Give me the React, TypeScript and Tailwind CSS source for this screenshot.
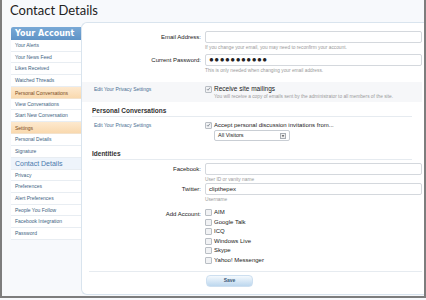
import React from 'react'

const sidebar: { label: string; kind?: 'head' | 'group' | 'active' }[] = [
  { label: 'Your Account', kind: 'head' },
  { label: 'Your Alerts' },
  { label: 'Your News Feed' },
  { label: 'Likes Received' },
  { label: 'Watched Threads' },
  { label: 'Personal Conversations', kind: 'group' },
  { label: 'View Conversations' },
  { label: 'Start New Conversation' },
  { label: 'Settings', kind: 'group' },
  { label: 'Personal Details' },
  { label: 'Signature' },
  { label: 'Contact Details', kind: 'active' },
  { label: 'Privacy' },
  { label: 'Preferences' },
  { label: 'Alert Preferences' },
  { label: 'People You Follow' },
  { label: 'Facebook Integration' },
  { label: 'Password' },
]

const accounts = ['AIM', 'Google Talk', 'ICQ', 'Windows Live', 'Skype', 'Yahoo! Messenger']

function Check({ on }: { on?: boolean }) {
  return (
    <span className="w-[7px] h-[7px] border border-[#b9bec4] bg-[#f1f2f4] rounded-[1px] flex items-center justify-center shrink-0">
      {on && (
        <svg viewBox="0 0 8 8" className="w-[6px] h-[6px]">
          <path d="M1.5 4.2 L3.2 6 L6.6 1.6" stroke="#6b7580" strokeWidth="1.2" fill="none" />
        </svg>
      )}
    </span>
  )
}

function Row({ label, children, className = '' }: { label?: string; children: React.ReactNode; className?: string }) {
  return (
    <div className={`flex ${className}`}>
      <div className="w-[123px] shrink-0 text-right pr-[4px] text-[6px] text-[#222] leading-[12px]">{label}</div>
      <div className="flex-1 min-w-0">{children}</div>
    </div>
  )
}

function Input({ value, dots }: { value?: string; dots?: boolean }) {
  return (
    <div className="h-[12px] border border-[#d4d8dd] rounded-[2px] bg-white flex items-center px-[3px] text-[6px] text-[#222]">
      {dots ? <span className="text-[8px] tracking-[0.5px] font-bold leading-none">●●●●●●●●●●●</span> : value}
    </div>
  )
}

function Hint({ children }: { children: React.ReactNode }) {
  return <div className="text-[4.8px] text-[#9a9a9a] leading-[7px] mt-[1px]">{children}</div>
}

export default function App() {
  return (
    <div className="w-[426px] h-[300px] bg-[#f7f9fc] overflow-hidden" style={{ fontFamily: '"Liberation Sans", Arial, sans-serif' }}>
      <div className="h-[298px] border-x-2 border-b-2 border-[#7d7d7d] flex flex-col">
        {/* Title */}
        <div className="h-[22px] pl-[8px] pt-[2px] text-[13px] leading-[16px] text-[#222]" style={{ fontFamily: 'Lato, "Liberation Sans", sans-serif' }}>
          Contact Details
        </div>

        <div className="flex flex-1 min-h-0">
          {/* Sidebar */}
          <div className="w-[70px] ml-[9px] mt-[5px] shrink-0 self-start bg-white">
            {sidebar.map((s, i) => {
              if (s.kind === 'head')
                return (
                  <div key={i} className="h-[13px] bg-gradient-to-b from-[#79a9d6] to-[#5f93c6] text-white text-[8px] font-bold leading-[13px] pl-[4px] rounded-tl-[2px]" style={{ fontFamily: '"Trebuchet MS", "DejaVu Sans", sans-serif' }}>
                    {s.label}
                  </div>
                )
              if (s.kind === 'group')
                return (
                  <div key={i} className="h-[12px] bg-gradient-to-b from-[#fde9cf] to-[#f9d9ae] text-[#7a4b1c] text-[5px] leading-[12px] pl-[4px] border-b border-[#f3e2cc]">
                    {s.label}
                  </div>
                )
              if (s.kind === 'active')
                return (
                  <div key={i} className="h-[12px] bg-[#eef4fb] text-[#4a79ad] text-[7px] leading-[12px] pl-[4px] border-b border-[#e8edf2]">
                    {s.label}
                  </div>
                )
              return (
                <div key={i} className="h-[11.7px] text-[#3e5f7f] text-[5px] leading-[11px] pl-[4px] border-b border-[#e8edf2]">
                  {s.label}
                </div>
              )
            })}
          </div>

          {/* Main panel */}
          <div className="flex-1 bg-white border-l border-t border-[#d9e4ee] rounded-tl-[6px] rounded-bl-[6px] border-b mb-[1px] pt-[8px] pr-[2px]">
            <Row label="Email Address:">
              <Input />
              <Hint>If you change your email, you may need to reconfirm your account.</Hint>
            </Row>
            <Row label="Current Password:" className="mt-[3px]">
              <Input dots />
              <Hint>This is only needed when changing your email address.</Hint>
            </Row>

            <div className="mt-[8px] bg-[#f6f7f9] h-[20px] flex items-start pt-[3px]">
              <div className="w-[123px] pl-[12px] text-[5px] text-[#4a6f92] leading-[8px]">Edit Your Privacy Settings</div>
              <div>
                <div className="flex items-center gap-[2px] text-[6.5px] text-[#222] leading-[8px]">
                  <Check on /> Receive site mailings
                </div>
                <div className="pl-[9px] text-[4.8px] text-[#9a9a9a] leading-[7px]">
                  You will receive a copy of emails sent by the administrator to all members of the site.
                </div>
              </div>
            </div>

            <div className="mx-[10px] mt-[3px] border-b border-[#e6ebf0] text-[6.5px] font-bold text-[#333] leading-[11px]">
              Personal Conversations
            </div>
            <div className="flex mt-[4px]">
              <div className="w-[123px] pl-[12px] text-[5px] text-[#4a6f92] leading-[8px]">Edit Your Privacy Settings</div>
              <div>
                <div className="flex items-center gap-[2px] text-[6px] text-[#222] leading-[8px]">
                  <Check on /> Accept personal discussion invitations from...
                </div>
                <div className="ml-[9px] mt-[1px] w-[76px] h-[11px] border border-[#c9ced4] rounded-[2px] flex items-center justify-between px-[3px] text-[5.5px] text-[#222]">
                  All Visitors
                  <span className="w-[6px] h-[6px] border border-[#a8adb3] bg-[#eee] flex items-center justify-center">
                    <svg viewBox="0 0 6 6" className="w-[4px] h-[4px]"><path d="M1 2 L5 2 L3 4.5 Z" fill="#444" /></svg>
                  </span>
                </div>
              </div>
            </div>

            <div className="mx-[10px] mt-[7px] border-b border-[#e6ebf0] text-[6.5px] font-bold text-[#333] leading-[11px]">
              Identities
            </div>
            <Row label="Facebook:" className="mt-[3px]">
              <Input />
              <Hint>User ID or vanity name</Hint>
            </Row>
            <Row label="Twitter:">
              <Input value="clipthepex" />
              <Hint>Username</Hint>
            </Row>
            <Row label="Add Account:" className="mt-[5px]">
              <div className="flex flex-col">
                {accounts.map(a => (
                  <div key={a} className="h-[9.5px] flex items-center gap-[2px] text-[6px] text-[#222]">
                    <Check /> {a}
                  </div>
                ))}
              </div>
            </Row>
            <div className="ml-[7px] mt-[6px] border-t border-[#e6ebf0] pt-[3px]">
              <div className="ml-[117px] w-[47px] h-[12px] rounded-[4px] bg-gradient-to-b from-[#f4f9fd] to-[#bcd7ee] border border-[#cddff0] text-[5px] font-bold text-[#3b5a78] flex items-center justify-center">
                Save
              </div>
            </div>
          </div>
        </div>
      </div>
    </div>
  )
}
